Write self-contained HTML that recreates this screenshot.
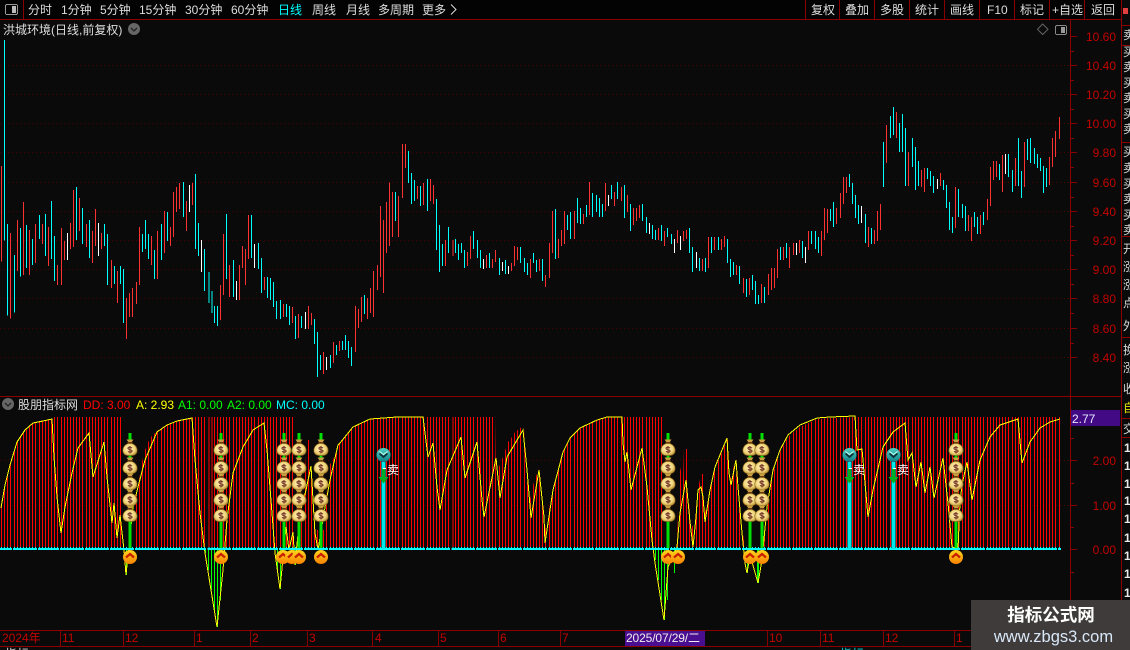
<!DOCTYPE html>
<html><head><meta charset="utf-8"><style>
html,body{margin:0;padding:0;background:#0a0a0a;overflow:hidden}
svg{display:block}
text{font-family:"Liberation Sans","WenQuanYi Zen Hei","Noto Sans CJK SC",sans-serif;font-size:12px}
.t{fill:#ddd}.a{fill:#c40000;text-anchor:end}.m{fill:#c40000}.r{fill:#d8d8d8}
.c{shape-rendering:crispEdges}
</style></head><body>
<svg width="1130" height="650" viewBox="0 0 1130 650" xmlns="http://www.w3.org/2000/svg">
<defs>
<radialGradient id="g" cx=".45" cy=".45" r=".65"><stop offset="0" stop-color="#fff4c0"/><stop offset=".6" stop-color="#f0d478"/><stop offset="1" stop-color="#a87c28"/></radialGradient>
<linearGradient id="cg" x1="0" y1="0" x2="0" y2="1"><stop offset="0" stop-color="#ffd820"/><stop offset="1" stop-color="#f88000"/></linearGradient>
<linearGradient id="tg" x1="0" y1="0" x2="0" y2="1"><stop offset="0" stop-color="#50d0c0"/><stop offset="1" stop-color="#108088"/></linearGradient>
<clipPath id="env"><polygon points="0,550 0,510 5,487 10,466 17,443 25,431 33,424 43,421 53,419 54,417 121,417 121,549 135,549 135,505 138,487 142,462 145,450 150,438 158,430 167,425 177,421 192,418 193,417 293,417 294,549 298,549 299,510 304,490 307,440 310,440 311,466 315,530 325,530 328,467 333,460 338,445 340,443 353,427 370,419 397,417 495,417 496,480 499,467 503,457 506,448 508,442 512,437 515,432 524,425 525,470 531,500 533,485 539,468 542,503 545,530 553,490 563,452 570,438 580,428 597,420 607,417 662,417 663,549 677,549 678,510 680,467 683,480 684,449 687,449 688,490 691,527 694,525 698,490 701,474 703,474 704,503 707,517 710,487 715,470 722,452 727,440 729,440 730,480 735,462 738,488 742,527 745,549 764,549 765,527 767,505 773,473 780,452 788,437 800,427 817,419 830,418 855,417 1061,417 1061,550"/></clipPath>
<clipPath id="bl"><rect x="0" y="548" width="1062" height="2"/></clipPath>
<clipPath id="bt"><rect x="0" y="547" width="1062" height="4"/></clipPath>
<path id="xa" d="M4 0v134M13 0v134M22 0v134M31 0v134M43 0v134M52 0v134M61 0v134M70 0v134M79 0v134M88 0v134M97 0v134M106 0v134M118 0v134M127 0v134M136 0v134M145 0v134M154 0v134M163 0v134M172 0v134M184 0v134M193 0v134M202 0v134M211 0v134M220 0v134M229 0v134M238 0v134M247 0v134M259 0v134M268 0v134M277 0v134M286 0v134M295 0v134M304 0v134M313 0v134M322 0v134M334 0v134M343 0v134M352 0v134M361 0v134M370 0v134M379 0v134M388 0v134M397 0v134M409 0v134M418 0v134M427 0v134M436 0v134M445 0v134M454 0v134M463 0v134M472 0v134M484 0v134M493 0v134M502 0v134M511 0v134M520 0v134M529 0v134M538 0v134M550 0v134M559 0v134M568 0v134M577 0v134M586 0v134M595 0v134M604 0v134M613 0v134M626 0v134M635 0v134M643 0v134M652 0v134M661 0v134M670 0v134M679 0v134M688 0v134M700 0v134M709 0v134M718 0v134M727 0v134M736 0v134M745 0v134M754 0v134M763 0v134M775 0v134M784 0v134M793 0v134M802 0v134M811 0v134M820 0v134M829 0v134M841 0v134M850 0v134M859 0v134M868 0v134M877 0v134M886 0v134M895 0v134"/>
<path id="xb" d="M4 0v134M16 0v134M25 0v134M34 0v134M43 0v134M52 0v134M61 0v134M70 0v134M79 0v134M91 0v134M100 0v134M109 0v134M118 0v134M127 0v134M136 0v134M145 0v134M154 0v134M166 0v134M175 0v134M184 0v134M193 0v134M202 0v134M211 0v134M220 0v134M232 0v134M241 0v134M250 0v134M259 0v134M268 0v134M277 0v134M286 0v134M295 0v134M307 0v134M316 0v134M325 0v134M334 0v134M343 0v134M352 0v134M361 0v134M370 0v134M382 0v134M391 0v134M400 0v134M409 0v134M418 0v134M427 0v134M436 0v134M445 0v134M458 0v134M466 0v134M475 0v134M484 0v134M493 0v134M502 0v134M511 0v134M520 0v134M532 0v134M541 0v134M550 0v134M559 0v134M568 0v134M577 0v134M586 0v134M598 0v134M607 0v134M616 0v134M625 0v134M634 0v134M643 0v134M652 0v134M661 0v134M673 0v134M682 0v134M691 0v134M700 0v134M709 0v134M718 0v134M727 0v134M736 0v134M748 0v134M757 0v134M766 0v134M775 0v134M784 0v134M793 0v134M802 0v134M811 0v134M823 0v134M832 0v134M841 0v134M850 0v134M859 0v134M868 0v134M877 0v134M889 0v134M898 0v134"/>
<path id="xc" d="M7 0v134M16 0v134M25 0v134M34 0v134M43 0v134M52 0v134M64 0v134M73 0v134M82 0v134M91 0v134M100 0v134M109 0v134M118 0v134M127 0v134M139 0v134M148 0v134M157 0v134M166 0v134M175 0v134M184 0v134M193 0v134M202 0v134M214 0v134M223 0v134M232 0v134M241 0v134M250 0v134M259 0v134M268 0v134M277 0v134M289 0v134M298 0v134M307 0v134M316 0v134M325 0v134M334 0v134M343 0v134M355 0v134M364 0v134M373 0v134M382 0v134M391 0v134M400 0v134M409 0v134M418 0v134M430 0v134M439 0v134M448 0v134M457 0v134M466 0v134M475 0v134M484 0v134M493 0v134M505 0v134M514 0v134M523 0v134M532 0v134M541 0v134M550 0v134M559 0v134M568 0v134M580 0v134M589 0v134M598 0v134M607 0v134M616 0v134M625 0v134M634 0v134M646 0v134M655 0v134M664 0v134M673 0v134M682 0v134M691 0v134M700 0v134M709 0v134M721 0v134M730 0v134M739 0v134M748 0v134M757 0v134M766 0v134M775 0v134M784 0v134M796 0v134M805 0v134M814 0v134M823 0v134M832 0v134M841 0v134M850 0v134M859 0v134M871 0v134M880 0v134M889 0v134M898 0v134M907 0v134M916 0v134M925 0v134M937 0v134M946 0v134M955 0v134M964 0v134M973 0v134M982 0v134M991 0v134M1000 0v134M1012 0v134M1021 0v134M1030 0v134M1039 0v134M1048 0v134M1057 0v134M1066 0v134M1075 0v134M1087 0v134M1096 0v134M1105 0v134M1114 0v134M1123 0v134M1132 0v134M1141 0v134M1150 0v134M1162 0v134M1171 0v134M1180 0v134M1189 0v134M1198 0v134M1207 0v134M1216 0v134M1225 0v134M1237 0v134M1246 0v134M1255 0v134M1264 0v134M1273 0v134M1282 0v134M1291 0v134M1303 0v134M1312 0v134M1321 0v134M1330 0v134M1339 0v134M1348 0v134M1357 0v134M1366 0v134M1378 0v134"/>
<g id="xall">
<use href="#xa" transform="translate(.17,416) scale(.33333,1)"/>
<use href="#xb" transform="translate(300.17,416) scale(.33333,1)"/>
<use href="#xc" transform="translate(600.17,416) scale(.33333,1)"/>
</g>
<g id="bag">
<path d="M-3.500 -9.500H3.500L1.500 -6.500H-1.500Z" fill="#c8a040"/>
<rect x="-2.500" y="-7" width="5" height="1.500" fill="#6a3a10"/>
<path d="M-2 -5.500C-8.500 -3 -9 5.500 -3 6.500H3C9 5.500 8.500 -3 2 -5.500Z" fill="url(#g)" stroke="#7a5814" stroke-width=".6"/>
<path d="M2 -.8C1 -2.200 -2 -2.200 -2 -.6C-2 1 2 .4 2 2C2 3.500 -1 3.500 -2 2.300M0 -3V4.500" fill="none" stroke="#7a3a28" stroke-width="1.200"/>
</g>
<g id="stack">
<rect x="-1.500" y="-16" width="3" height="115" fill="#00e000" class="c"/>
<use href="#bag" y="0"/><use href="#bag" y="18"/><use href="#bag" y="34"/><use href="#bag" y="50"/><use href="#bag" y="66"/>
</g>
<g id="coin"><circle r="7" fill="url(#cg)"/><path d="M-4 .5L0 -3L4 .5" fill="none" stroke="#c81e00" stroke-width="2.200"/></g>
<g id="sell">
<rect x="-2" y="7" width="4" height="87" fill="#00e8e8" class="c"/>
<path d="M-1.500 14H1.500V22H5L0 28.500L-5 22H-1.500Z" fill="#00b020"/>
<rect x="-0.500" y="13" width="3" height="1" fill="#fff" class="c"/>
<circle r="7" fill="url(#tg)"/>
<path d="M-4 -1.500L0 2L4 -1.500" fill="none" stroke="#0a3038" stroke-width="1.800"/>
<path d="M-4 -3.500L0 -.5L4 -3.500" fill="none" stroke="#c8fff4" stroke-width="1"/>
</g>
</defs>

<rect width="1130" height="650" fill="#0a0a0a"/>
<rect width="1122" height="19" fill="#030303"/>

<!-- grid -->
<path class="c" d="M0 65.500H1070M0 94.500H1070M0 123.500H1070M0 152.500H1070M0 182.500H1070M0 211.500H1070M0 240.500H1070M0 269.500H1070M0 298.500H1070M0 328.500H1070M0 357.500H1070M0 460.500H1070M0 505.500H1070" stroke="#4a0000" stroke-width="1" stroke-dasharray="1 3" fill="none"/>

<!-- candles -->
<g class="c" fill="none" stroke-width="3" transform="translate(.17,30) scale(.33333)">
<path stroke="#ff3232" d="M4 408V695M31 609V866M52 570V723M70 516V735M88 600V735M106 582V699M127 582V642M145 591V708M172 705V765M184 594V765M193 633V690M211 579V657M220 480V651M238 504V603M259 582V651M277 603V699M286 537V648M304 609V657M334 690V774M352 723V819M379 804V927M388 789V861M397 774V861M409 756V822M418 591V765M454 618V705M472 603V747M493 543V669M511 591V648M520 486V621M529 471V546M538 459V537M559 513V603M577 459V525M661 765V870M670 612V795M688 705V801M718 705V810M727 648V714M736 657V765M745 555V687M793 741V780M850 822V861M877 831V879M895 852V924"/>
<path stroke="#00ffff" d="M13 30V632M22 582V857M43 675V848M61 594V740M79 585V714M97 627V705M118 555V627M136 552V678M154 513V687M163 618V753M229 471V630M247 534V642M268 570V684M313 582V648M322 612V765M343 708V762M361 708V762M370 717V879M427 612V666M436 570V657M445 612V687M463 660V747M484 582V690M502 546V633M550 456V561M586 432V657M595 579V678M613 657V783M626 726V819M635 783V849M643 828V879M652 828V888M679 552V747M700 690V801M754 555V684M775 639V717M784 684V789M802 741V804M811 744V810M820 756V831M829 813V867M841 810V867M859 822V861M868 828V885M886 858V927"/>
<path stroke="#ffffff" d="M202 609V690M295 579V678M568 465V546M604 630V726M709 753V810M763 642V714"/>
</g>
<g class="c" fill="none" stroke-width="3" transform="translate(300.17,130) scale(.33333)">
<path stroke="#ff3232" d="M25 528V597M34 549V585M70 666V732M100 636V699M118 633V663M166 528V666M175 537V594M184 501V576M202 504V567M211 474V549M220 423V561M232 405V480M241 228V441M250 270V489M259 216V369M268 158V348M277 186V321M295 198V321M307 42V204M316 42V114M352 168V207M370 159V225M391 147V213M400 165V222M436 330V408M458 330V378M502 366V408M511 318V387M559 375V414M577 387V414M586 360V396M634 399V423M643 348V408M652 351V390M691 387V444M718 387V423M736 435V471M748 339V444M757 243V369M775 327V384M784 300V348M793 243V342M823 243V327M850 252V282M868 156V255"/>
<path stroke="#00ffff" d="M4 558V594M43 567V642M52 606V741M61 675V720M91 675V714M109 645V675M127 633V660M136 615V660M145 633V684M154 651V708M193 495V552M286 186V273M325 63V159M334 129V222M343 150V213M361 168V228M382 147V243M409 207V360M418 285V426M427 342V408M445 291V369M466 327V369M475 342V390M484 339V369M493 360V414M520 303V357M532 330V384M541 360V414M568 369V414M598 384V435M616 390V432M661 351V399M673 384V426M682 399V435M700 369V399M709 390V426M727 387V453M766 237V387M802 255V300M811 246V327M832 204V279M841 234V282M859 225V261M877 189V261M889 195V246M898 204V261"/>
<path stroke="#ffffff" d="M16 546V597M79 681V720M550 387V417M607 396V423M625 408V432"/>
</g>
<g class="c" fill="none" stroke-width="3" transform="translate(600.17,100) scale(.33333)">
<path stroke="#ff3232" d="M16 249V333M43 276V318M64 261V303M82 285V336M100 324V375M109 324V363M118 315V354M175 384V420M193 393V438M232 390V429M250 393V423M259 390V417M307 477V513M325 411V504M343 411V450M364 417V450M373 408V441M409 495V525M430 534V579M448 534V585M484 552V609M505 522V585M514 504V570M523 504V564M532 447V534M550 441V480M568 441V504M580 429V465M598 420V459M625 393V450M664 393V468M673 324V420M682 327V399M709 324V372M721 279V354M730 231V312M739 231V279M805 381V441M823 390V432M832 333V423M841 312V390M859 75V189M889 36V114M925 156V258M964 210V261M973 204V276M1021 219V258M1066 261V384M1105 345V393M1114 351V423M1141 345V402M1162 297V360M1171 201V318M1180 183V240M1189 183V231M1207 165V276M1246 174V258M1273 126V261M1348 171V255M1357 114V201M1366 93V171M1378 51V117"/>
<path stroke="#00ffff" d="M7 312V351M34 255V297M52 246V297M73 255V354M91 312V393M127 312V363M139 351V399M157 375V417M166 390V420M184 375V423M202 384V411M214 402V432M268 384V459M277 441V516M298 474V513M316 474V516M334 411V459M355 411V450M382 417V489M391 477V531M400 486V525M418 498V552M439 537V591M457 525V570M466 543V612M475 585V612M493 561V609M541 441V480M559 429V474M607 423V474M634 393V432M646 393V447M655 411V459M691 327V363M700 306V381M748 222V261M757 249V312M766 285V354M775 315V372M796 342V429M814 384V432M850 126V261M871 48V114M880 21V105M898 69V156M907 42V156M916 84V258M937 114V201M946 141V270M955 183V258M982 204V237M991 213V258M1000 228V279M1030 240V270M1039 255V324M1048 306V390M1057 351V399M1075 267V351M1087 312V354M1096 318V393M1123 336V381M1132 351V402M1150 336V375M1198 192V240M1225 162V231M1237 210V276M1255 114V258M1264 213V294M1282 117V180M1291 114V189M1303 144V192M1312 162V204M1321 174V213M1330 198V279M1339 204V261"/>
<path stroke="#ffffff" d="M25 285V318M148 369V402M223 417V459M241 408V450M289 456V504M589 429V465M616 441V489M784 318V369M1012 237V267M1216 162V222"/>
</g>

<!-- indicator bars -->
<g clip-path="url(#env)"><use href="#xall" class="c" stroke="#ff0000" stroke-width="3" fill="none"/></g>
<path class="c" d="M126.500 550V575M205.500 550V553M208.500 550V570M211.500 550V590M214.500 550V610M217.500 550V627M220.500 550V600M277.500 550V572M280.500 550V589M295.500 550V565M655.500 550V560M658.500 550V580M661.500 550V600M664.500 550V620M667.500 550V600M674.500 550V573M747.500 550V573M757.500 550V583M758.500 550V583" stroke="#00ff00" fill="none"/>
<polyline class="c" fill="none" stroke="#ffff00" stroke-width="1" points="1,508 5,485 10,465 17,442 25,430 33,423 43,421 52,419 54,457 57,497 61,533 65,507 72,473 78,448 89,433 93,477 104,442 107,477 112,523 114,503 117,538 120,515 124,550 126,575 133,507 138,487 145,460 157,432 167,425 177,421 192,418 195,460 200,513 205,553 211,590 217,627 223,570 227,520 233,473 243,447 253,430 264,423 267,450 272,513 275,553 280,589 286,527 289,550 293,532 295,565 300,513 306,490 311,466 315,533 318,550 324,513 330,480 338,445 340,443 353,427 370,419 397,417 423,417 425,433 428,457 433,443 437,487 440,510 447,470 461,437 465,478 477,442 482,500 484,517 496,458 500,498 507,457 523,430 527,470 531,518 539,470 544,517 545,543 553,490 563,452 570,438 580,428 597,420 607,417 622,417 623,443 625,462 627,452 631,490 642,448 647,487 652,540 655,563 664,620 668,567 677,547 680,513 686,480 690,522 693,547 696,517 698,490 701,487 703,497 705,522 710,490 715,467 722,450 727,438 729,473 731,485 736,460 738,487 742,533 745,563 747,573 750,555 758,583 762,560 767,507 773,470 780,450 788,435 800,425 817,418 830,417 855,416 857,450 862,449 865,483 868,517 873,490 883,447 893,432 905,423 908,460 912,453 916,487 921,462 925,493 930,467 934,498 943,458 948,503 952,547 958,549 960,503 962,485 967,462 972,500 980,460 990,437 1000,425 1018,419 1022,463 1030,442 1040,428 1050,422 1060,419"/>
<!-- baseline: 3px segments per bar leaving 1px gaps, plus ticks -->
<g clip-path="url(#bl)"><use href="#xall" class="c" stroke="#00ffff" stroke-width="9" fill="none"/></g>
<g clip-path="url(#bt)"><use href="#xall" class="c" stroke="#00ffff" stroke-width="3" fill="none"/></g>

<!-- sell signals -->
<use href="#sell" x="383.500" y="455"/><use href="#sell" x="849.500" y="455"/><use href="#sell" x="893.500" y="455"/>
<text x="387" y="474" fill="#fff">卖</text><text x="853" y="474" fill="#fff">卖</text><text x="897" y="474" fill="#fff">卖</text>

<!-- bag stacks -->
<use href="#stack" x="130" y="449"/><use href="#stack" x="221" y="449"/><use href="#stack" x="284" y="449"/><use href="#stack" x="299" y="449"/><use href="#stack" x="321" y="449"/><use href="#stack" x="668" y="449"/><use href="#stack" x="750" y="449"/><use href="#stack" x="762" y="449"/><use href="#stack" x="956" y="449"/>
<use href="#coin" x="130" y="557"/><use href="#coin" x="221" y="557"/><use href="#coin" x="283" y="557"/><use href="#coin" x="292" y="557"/><use href="#coin" x="299" y="557"/><use href="#coin" x="321" y="557"/><use href="#coin" x="668" y="557"/><use href="#coin" x="678" y="557"/><use href="#coin" x="750" y="557"/><use href="#coin" x="762" y="557"/><use href="#coin" x="956" y="557"/>

<!-- frame lines -->
<path class="c" d="M0 19.500H1122M23.500 0V19M805.500 0V19M839.500 0V19M874.500 0V19M909.500 0V19M944.500 0V19M979.500 0V19M1014.500 0V19M1049.500 0V19M1084.500 0V19M1070.500 19V630M1121.500 0V650M0 396.500H1122M0 630.500H971M0 646.500H971M1122 25.500H1130M1122 45.500H1130M1122 142.500H1130M1122 236.500H1130M1122 337.500H1130M1122 418.500H1130M1122 437.500H1130" stroke="#8a0000" stroke-width="1" fill="none"/>
<path class="c" d="M1071 36.500H1077M1071 65.500H1077M1071 94.500H1077M1071 123.500H1077M1071 152.500H1077M1071 182.500H1077M1071 211.500H1077M1071 240.500H1077M1071 269.500H1077M1071 298.500H1077M1071 328.500H1077M1071 357.500H1077M1071 51.500H1074M1071 80.500H1074M1071 109.500H1074M1071 138.500H1074M1071 167.500H1074M1071 197.500H1074M1071 226.500H1074M1071 255.500H1074M1071 284.500H1074M1071 313.500H1074M1071 343.500H1074M1071 460.500H1077M1071 505.500H1077M1071 549.500H1077M1071 438.500H1074M1071 483.500H1074M1071 527.500H1074M1071 572.500H1074M60.500 630V646M123.500 630V646M194.500 630V646M250.500 630V646M307.500 630V646M372.500 630V646M438.500 630V646M498.500 630V646M560.500 630V646M767.500 630V646M820.500 630V646M883.500 630V646M954.500 630V646" stroke="#8a0000" fill="none"/>

<!-- toolbar -->
<rect x="5.500" y="4.500" width="12" height="10" rx="1.500" fill="none" stroke="#999" class="c"/><rect x="12" y="6" width="4" height="7" fill="#bbb" class="c"/>
<text class="t" x="28" y="14">分时</text><text class="t" x="61" y="14">1分钟</text><text class="t" x="100" y="14">5分钟</text><text class="t" x="139" y="14">15分钟</text><text class="t" x="185" y="14">30分钟</text><text class="t" x="231" y="14">60分钟</text>
<text x="278" y="14" fill="#00ffff">日线</text><text class="t" x="312" y="14">周线</text><text class="t" x="346" y="14">月线</text><text class="t" x="378" y="14">多周期</text><text class="t" x="422" y="14">更多</text>
<path d="M451 4.500L456 9.500L451 14.500" fill="none" stroke="#ddd"/>
<text class="t" x="811" y="14">复权</text><text class="t" x="845" y="14">叠加</text><text class="t" x="880" y="14">多股</text><text class="t" x="915" y="14">统计</text><text class="t" x="950" y="14">画线</text><text class="t" x="987" y="14">F10</text><text class="t" x="1020" y="14">标记</text><text class="t" x="1052" y="14">+自选</text><text class="t" x="1091" y="14">返回</text>

<!-- titles -->
<text class="t" x="3" y="34">洪城环境(日线,前复权)</text>
<circle cx="134" cy="29" r="6" fill="#666"/><path d="M131 28L134 31L137 28" fill="none" stroke="#222" stroke-width="1.300"/>
<path d="M1042.700 24L1048 29.300L1042.700 34.500L1037.500 29.300Z" fill="none" stroke="#666"/>
<rect x="1055.500" y="25.500" width="11" height="9" rx="1.500" fill="none" stroke="#888" class="c"/><rect x="1061" y="27" width="4" height="6" fill="#999" class="c"/>
<circle cx="8" cy="404" r="6" fill="#666"/><path d="M5 403L8 406L11 403" fill="none" stroke="#222" stroke-width="1.300"/>
<text class="t" x="18" y="409">股朋指标网</text>
<text x="83" y="409" fill="#ff0000">DD: 3.00</text><text x="136" y="409" fill="#ffff00">A: 2.93</text><text x="178" y="409" fill="#00ff00">A1: 0.00</text><text x="227" y="409" fill="#00ff00">A2: 0.00</text><text x="276" y="409" fill="#00ffff">MC: 0.00</text>

<!-- axis labels -->
<text class="a" x="1116" y="41">10.60</text><text class="a" x="1116" y="70">10.40</text><text class="a" x="1116" y="99">10.20</text><text class="a" x="1116" y="128">10.00</text><text class="a" x="1116" y="157">9.80</text><text class="a" x="1116" y="187">9.60</text><text class="a" x="1116" y="216">9.40</text><text class="a" x="1116" y="245">9.20</text><text class="a" x="1116" y="274">9.00</text><text class="a" x="1116" y="303">8.80</text><text class="a" x="1116" y="333">8.60</text><text class="a" x="1116" y="362">8.40</text>
<text class="a" x="1116" y="465">2.00</text><text class="a" x="1116" y="510">1.00</text><text class="a" x="1116" y="554">0.00</text>
<rect x="1071" y="410" width="49" height="16" fill="#430a86"/>
<text x="1072" y="423" fill="#e8e8ff">2.77</text>

<!-- time axis -->
<text class="m" x="2" y="642">2024年</text><text class="m" x="62" y="642">11</text><text class="m" x="125" y="642">12</text><text class="m" x="196" y="642">1</text><text class="m" x="252" y="642">2</text><text class="m" x="309" y="642">3</text><text class="m" x="375" y="642">4</text><text class="m" x="440" y="642">5</text><text class="m" x="500" y="642">6</text><text class="m" x="562" y="642">7</text><text class="m" x="769" y="642">10</text><text class="m" x="822" y="642">11</text><text class="m" x="885" y="642">12</text><text class="m" x="956" y="642">1</text>
<rect x="625" y="631" width="80" height="15" fill="#4a0f90"/>
<text x="626" y="642" fill="#eee" textLength="74">2025/07/29/二</text>
<text x="5" y="658" fill="#ddd">指标</text><text x="840" y="658" fill="#00e0e0">指标</text>

<!-- right column -->
<rect x="1123" y="8" width="5" height="6" fill="#e04040" class="c"/>
<text class="r" x="1123" y="39">卖</text><text class="r" x="1123" y="56">买</text><text class="r" x="1123" y="71">卖</text><text class="r" x="1123" y="87">买</text><text class="r" x="1123" y="102">卖</text><text class="r" x="1123" y="118">买</text><text class="r" x="1123" y="133">卖</text><text class="r" x="1123" y="156">买</text><text class="r" x="1123" y="172">卖</text><text class="r" x="1123" y="188">买</text><text class="r" x="1123" y="203">卖</text><text class="r" x="1123" y="219">买</text><text class="r" x="1123" y="234">卖</text>
<text class="r" x="1123" y="253">开</text><text class="r" x="1123" y="271">涨</text><text class="r" x="1123" y="289">涨</text><text class="r" x="1123" y="307">点</text><text class="r" x="1123" y="330">外</text><text class="r" x="1123" y="354">换</text><text class="r" x="1123" y="372">涨</text><text class="r" x="1123" y="393">收</text>
<text x="1123" y="412" fill="#e0e000">自</text><text class="r" x="1123" y="433">交</text>
<g font-weight="bold" fill="#e8e8e8"><text x="1124" y="452">1</text><text x="1124" y="470">1</text><text x="1124" y="488">1</text><text x="1124" y="505">1</text><text x="1124" y="523">1</text><text x="1124" y="542">1</text><text x="1124" y="560">1</text><text x="1124" y="578">1</text><text x="1124" y="597">1</text></g>

<!-- watermark -->
<rect x="971" y="600" width="159" height="50" fill="#403b3b"/>
<text x="1051" y="621" text-anchor="middle" style="font-size:17.500px;font-weight:bold" fill="#fff">指标公式网</text>
<text x="1053.500" y="642" text-anchor="middle" style="font-size:16.500px" fill="#d8e8f8">www.zbgs3.com</text>
</svg>
</body></html>
